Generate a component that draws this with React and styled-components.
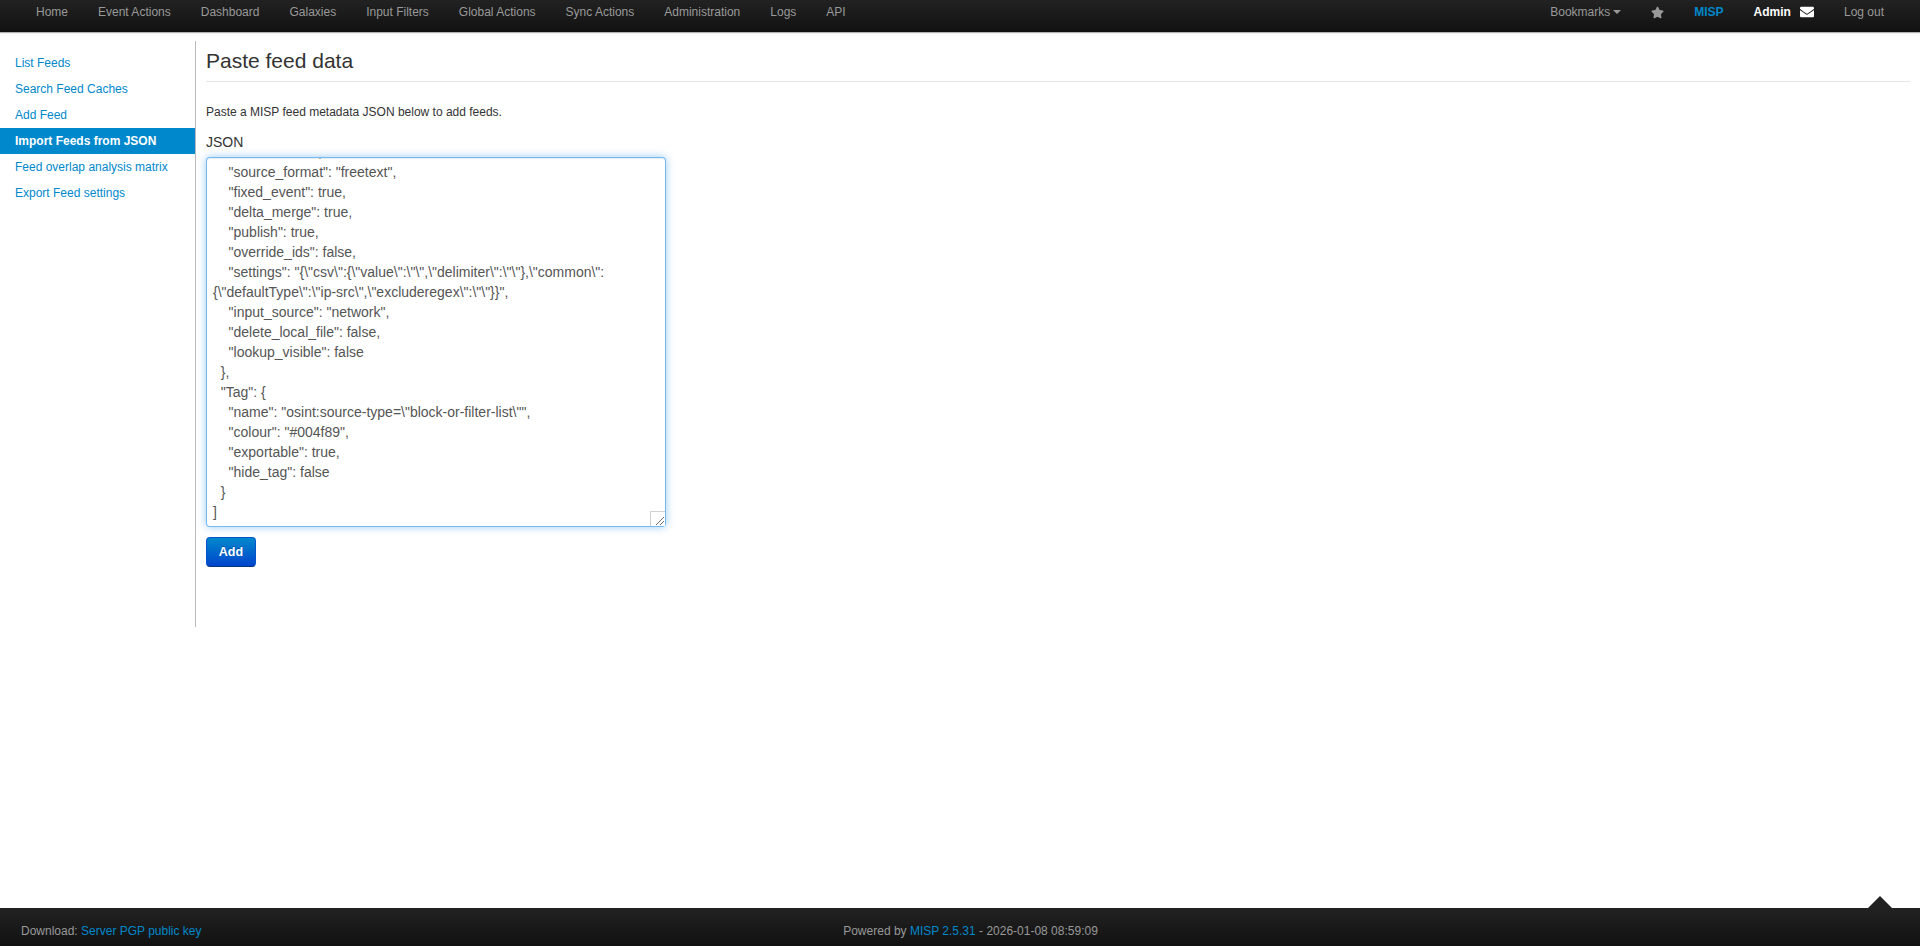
import { useEffect, useRef } from "react";
import styled, { createGlobalStyle } from "styled-components";
import { FaStar, FaEnvelope } from "react-icons/fa";

const GlobalStyle = createGlobalStyle`
  html, body {
    margin: 0;
    padding: 0;
    background: #fff;
  }

  body {
    font-family: "Liberation Sans", Arial, sans-serif;
    font-size: 12px;
    line-height: 20px;
    color: #333;
  }
`;

const Page = styled.div`
  display: flex;
  flex-direction: column;
  min-height: 100vh;
`;

const NavBar = styled.nav`
  display: flex;
  justify-content: space-between;
  height: 32px;
  padding: 0 21px;
  box-sizing: border-box;
  background: linear-gradient(to bottom, #222222, #111111);
  box-shadow: 0 1px 1px rgba(0, 0, 0, 0.3);
`;

const NavGroup = styled.div`
  display: flex;
`;

const NavItem = styled.a`
  display: flex;
  align-items: center;
  gap: ${(props) => props.$gap || 0}px;
  height: 24px;
  padding: 0 15px;
  color: ${(props) => props.$color || "#999999"};
  font-weight: ${(props) => (props.$bold ? 700 : 400)};
  white-space: nowrap;
`;

const Caret = styled.span`
  width: 0;
  height: 0;
  margin-left: 3px;
  border-top: 4px solid #999999;
  border-left: 4px solid transparent;
  border-right: 4px solid transparent;
`;

const Main = styled.main`
  flex: 1;
  display: flex;
  align-items: flex-start;
  padding-top: 9px;
`;

const SideBar = styled.ul`
  width: 195px;
  height: 586px;
  margin: 0;
  padding: 9px 0 0;
  box-sizing: content-box;
  border-right: 1px solid #bbbbbb;
  list-style: none;
  height: 577px;
`;

const SideItem = styled.li`
  height: 26px;
  padding-left: 15px;
  line-height: 26px;
  color: ${(props) => (props.$active ? "#ffffff" : "#0088cc")};
  background: ${(props) => (props.$active ? "#0088cc" : "transparent")};
  font-weight: ${(props) => (props.$active ? 700 : 400)};
`;

const Content = styled.section`
  flex: 1;
  padding: 0 10px;
`;

const Title = styled.h2`
  margin: 0 0 20px;
  height: 40px;
  border-bottom: 1px solid #e5e5e5;
  font-size: 21px;
  font-weight: 400;
  line-height: 40px;
  color: #333333;
`;

const Intro = styled.p`
  margin: 0 0 10px;
  color: #333333;
`;

const FieldLabel = styled.label`
  display: block;
  margin-bottom: 5px;
  font-size: 14px;
  line-height: 20px;
  color: #333333;
`;

const arrowUp = `url("data:image/svg+xml,%3Csvg xmlns='http://www.w3.org/2000/svg' width='15' height='17'%3E%3Cpath d='M3 11h9L7.5 6z' fill='%23808080'/%3E%3C/svg%3E")`;
const arrowDown = `url("data:image/svg+xml,%3Csvg xmlns='http://www.w3.org/2000/svg' width='15' height='17'%3E%3Cpath d='M3 5h9L7.5 10z' fill='%23808080'/%3E%3C/svg%3E")`;
const grip = `url("data:image/svg+xml,%3Csvg xmlns='http://www.w3.org/2000/svg' width='15' height='15'%3E%3Cpath d='M.5 15V.5H15' fill='none' stroke='%23d0d0d0'/%3E%3Cpath d='M6 14L14 6M10 14L14 10' stroke='%23707070' fill='none'/%3E%3C/svg%3E")`;

const JsonArea = styled.textarea`
  display: block;
  width: 460px;
  height: 370px;
  margin: 0 0 10px;
  padding: 4px 6px;
  box-sizing: border-box;
  border: 1px solid rgba(82, 168, 236, 0.8);
  border-radius: 4px;
  outline: 0;
  box-shadow: inset 0 1px 1px rgba(0, 0, 0, 0.075), 0 0 8px rgba(82, 168, 236, 0.6);
  font-family: "Liberation Sans", Arial, sans-serif;
  font-size: 14px;
  line-height: 20px;
  color: #555555;
  caret-color: #222222;
  resize: both;

  &::-webkit-scrollbar {
    width: 15px;
  }

  &::-webkit-scrollbar-track {
    background: #fafafa;
  }

  &::-webkit-scrollbar-thumb {
    min-height: 17px;
    background: #8a8a8a;
    background-clip: padding-box;
    border: 3px solid transparent;
    border-radius: 8px;
  }

  &::-webkit-scrollbar-button:single-button:vertical:decrement {
    display: block;
    height: 17px;
    background: #fafafa ${arrowUp} no-repeat center;
  }

  &::-webkit-scrollbar-button:single-button:vertical:increment {
    display: block;
    height: 17px;
    background: #fafafa ${arrowDown} no-repeat center;
  }

  &::-webkit-resizer {
    background: #ffffff ${grip} no-repeat center;
  }
`;

const AddButton = styled.button`
  display: block;
  width: 50px;
  height: 30px;
  padding: 0;
  border: 1px solid #0055b3;
  border-color: #0055cc #0055cc #003580;
  border-radius: 4px;
  background: linear-gradient(to bottom, #0088cc, #0044cc);
  color: #ffffff;
  font-family: "Liberation Sans", Arial, sans-serif;
  font-size: 12.5px;
  font-weight: 700;
  line-height: 20px;
  text-shadow: 0 -1px 0 rgba(0, 0, 0, 0.25);
`;

const Footer = styled.footer`
  position: relative;
  display: grid;
  grid-template-columns: 1fr auto 1fr;
  height: 38px;
  padding: 13px 21px 0;
  box-sizing: border-box;
  background: linear-gradient(to bottom, #222222, #111111);
  color: #999999;
`;

const FooterCentre = styled.div`
  padding-left: 21px;
`;

const FooterLink = styled.a`
  color: #0088cc;
`;

const UpArrow = styled.span`
  position: absolute;
  top: -12px;
  right: 28px;
  width: 0;
  height: 0;
  border-bottom: 12px solid #222222;
  border-left: 12px solid transparent;
  border-right: 12px solid transparent;
`;

const leftNav = [
  "Home",
  "Event Actions",
  "Dashboard",
  "Galaxies",
  "Input Filters",
  "Global Actions",
  "Sync Actions",
  "Administration",
  "Logs",
  "API",
];

const sideItems = [
  { label: "List Feeds" },
  { label: "Search Feed Caches" },
  { label: "Add Feed" },
  { label: "Import Feeds from JSON", active: true },
  { label: "Feed overlap analysis matrix" },
  { label: "Export Feed settings" },
];

const feedNames = [
  ["CIRCL OSINT Feed", "CIRCL", "https://www.circl.lu/doc/misp/feed-osint"],
  ["The Botvrij.eu Data", "Botvrij.eu", "https://www.botvrij.eu/data/feed-osint"],
  ["blockrules of rules.emergingthreats.net", "rules.emergingthreats.net", "https://rules.emergingthreats.net/blockrules/compromised-ips.txt"],
  ["Tor exit nodes", "TOR Node List from dan.me.uk", "https://www.dan.me.uk/torlist/?exit"],
  ["Tor ALL nodes", "TOR Node List from dan.me.uk", "https://www.dan.me.uk/torlist/"],
  ["cybercrime-tracker.net - all", "cybercrime-tracker.net", "https://cybercrime-tracker.net/all.php"],
  ["Phishtank online valid phishing", "Phishtank", "https://data.phishtank.com/data/online-valid.csv"],
  ["ip-block-list - abuse.ch", "abuse.ch", "https://feodotracker.abuse.ch/downloads/ipblocklist.csv"],
  ["ci-badguys.txt", "cinsscore.com", "https://cinsscore.com/list/ci-badguys.txt"],
  ["alienvault reputation generic", "OTX", "https://reputation.alienvault.com/reputation.generic"],
  ["blocklist.de/lists/all.txt", "blocklist.de", "https://lists.blocklist.de/lists/all.txt"],
  ["greensnow", "greensnow.co", "https://blocklist.greensnow.co/greensnow.txt"],
  ["firehol_level1", "iplists.firehol.org", "https://iplists.firehol.org/files/firehol_level1.netset"],
];

const settings = String.raw`"{\"csv\":{\"value\":\"\",\"delimiter\":\"\"},\"common\":{\"defaultType\":\"ip-src\",\"excluderegex\":\"\"}}"`;
const tagName = String.raw`"osint:source-type=\"block-or-filter-list\""`;

const feedEntry = ([name, provider, url], id, last) => `  "Feed": {
    "name": "${name}",
    "provider": "${provider}",
    "url": "${url}",
    "rules": "",
    "enabled": false,
    "distribution": "0",
    "sharing_group_id": "0",
    "tag_id": "0",
    "default": false,
    "source_format": "freetext",
    "fixed_event": true,
    "delta_merge": true,
    "publish": true,
    "override_ids": false,
    "settings": ${settings},
    "input_source": "network",
    "delete_local_file": false,
    "lookup_visible": false
  },
  "Tag": {
    "name": ${tagName},
    "colour": "#004f89",
    "exportable": true,
    "hide_tag": false
  }${last ? "" : ","}`;

const jsonText = `[\n${feedNames
  .map((feed, index) => feedEntry(feed, index, index === feedNames.length - 1))
  .join("\n")}\n]`;

export default function App() {
  const areaRef = useRef(null);

  // the reference shows the field focused and scrolled to its end
  useEffect(() => {
    const area = areaRef.current;
    area.focus();
    area.setSelectionRange(jsonText.length, jsonText.length);
    area.scrollTop = area.scrollHeight;
  }, []);

  return (
    <Page>
      <GlobalStyle />
      <NavBar>
        <NavGroup>
          {leftNav.map((label) => (
            <NavItem key={label}>{label}</NavItem>
          ))}
        </NavGroup>
        <NavGroup>
          <NavItem>
            Bookmarks
            <Caret />
          </NavItem>
          <NavItem>
            <FaStar size={13} color="#999999" />
          </NavItem>
          <NavItem $color="#0088cc" $bold>
            MISP
          </NavItem>
          <NavItem $color="#ffffff" $bold $gap={9}>
            Admin
            <FaEnvelope size={14} color="#ffffff" />
          </NavItem>
          <NavItem>Log out</NavItem>
        </NavGroup>
      </NavBar>
      <Main>
        <SideBar>
          {sideItems.map((item) => (
            <SideItem key={item.label} $active={item.active}>
              {item.label}
            </SideItem>
          ))}
        </SideBar>
        <Content>
          <Title>Paste feed data</Title>
          <Intro>Paste a MISP feed metadata JSON below to add feeds.</Intro>
          <FieldLabel htmlFor="FeedJson">JSON</FieldLabel>
          <JsonArea id="FeedJson" ref={areaRef} defaultValue={jsonText} spellCheck={false} />
          <AddButton type="button">Add</AddButton>
        </Content>
      </Main>
      <Footer>
        <div>
          Download: <FooterLink>Server PGP public key</FooterLink>
        </div>
        <FooterCentre>
          Powered by <FooterLink>MISP 2.5.31</FooterLink> - 2026-01-08 08:59:09
        </FooterCentre>
        <div />
        <UpArrow />
      </Footer>
    </Page>
  );
}
